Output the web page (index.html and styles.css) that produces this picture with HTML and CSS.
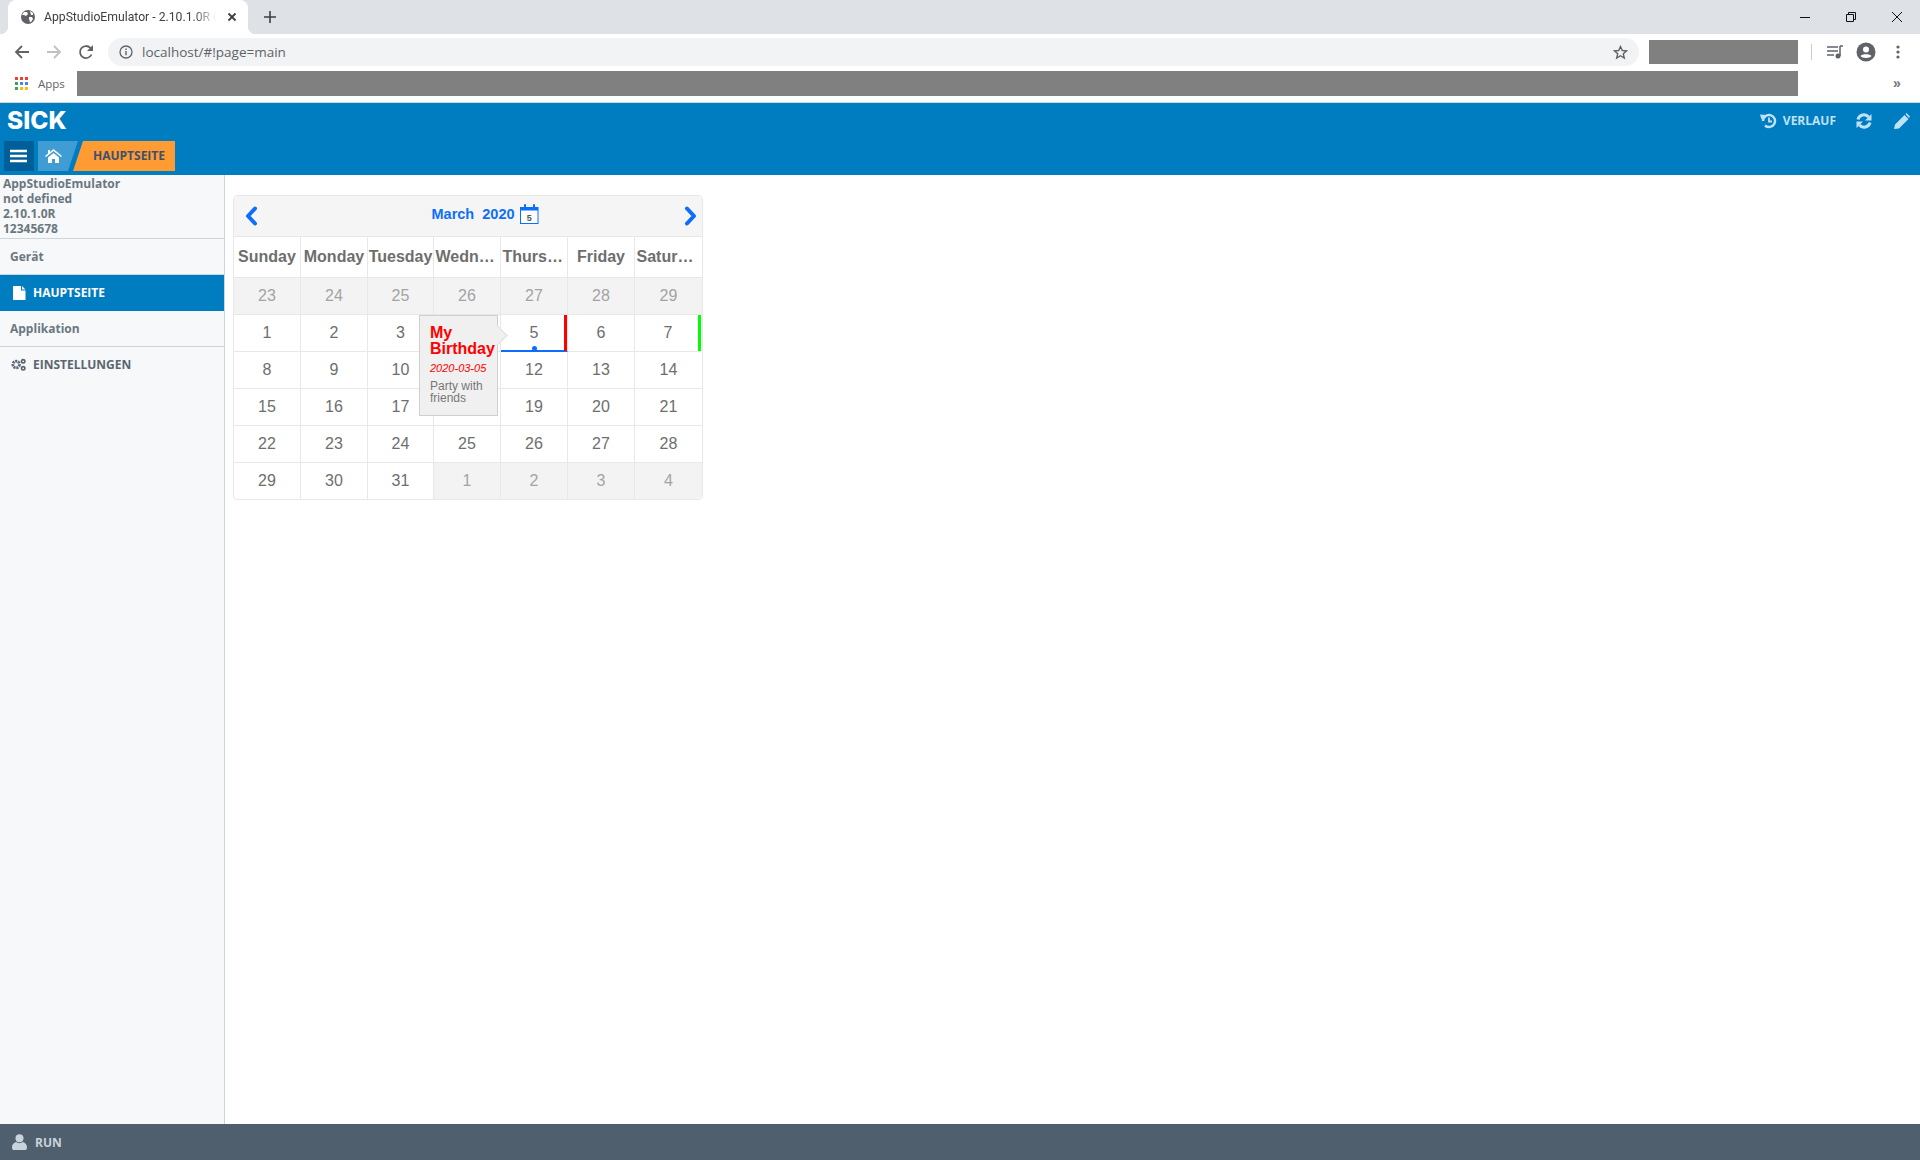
FILE: index.html
```html
<!DOCTYPE html>
<html lang="en">
<head>
    <meta charset="UTF-8">
    <title>AppStudioEmulator</title>
    <link rel="stylesheet" href="styles.css">
</head>
<body>
    <div class="tabstrip">
        <div class="tab">
            <svg class="tab-globe" width="14" height="14" viewBox="0 0 14 14"><circle cx="7" cy="7" r="7" fill="#5f6368"/><path d="M3 2l3 0 1 2-2 2-2-1-2 0zM8 7l3 0 1 2-2 3-1 0-1-3zM9 1l3 2 0 2-2 0z" fill="#fff"/></svg>
            <span class="tab-title">AppStudioEmulator - 2.10.1.0R (n</span>
            <svg class="tab-close" width="10" height="10" viewBox="0 0 10 10"><path d="M1.5 1.5l7 7M8.5 1.5l-7 7" stroke="#3c4043" stroke-width="1.8"/></svg>
        </div>
        <svg class="tab-new" width="12" height="12" viewBox="0 0 12 12"><path d="M6 0v12M0 6h12" stroke="#3c4043" stroke-width="1.6"/></svg>
        <div class="window-btns">
            <svg width="12" height="12" viewBox="0 0 12 12"><path d="M1 6.5h10" stroke="#111" stroke-width="1"/></svg>
            <svg width="12" height="12" viewBox="0 0 12 12"><path d="M1.5 3.5h7v7h-7zM3.5 3.5v-2h7v7h-2" fill="none" stroke="#111"/></svg>
            <svg width="12" height="12" viewBox="0 0 12 12"><path d="M1 1l10 10M11 1l-10 10" stroke="#111"/></svg>
        </div>
    </div>

    <div class="toolbar">
        <svg class="nav-icon" width="16" height="16" viewBox="0 0 16 16"><path d="M15 8H2M8 2L2 8l6 6" fill="none" stroke="#5f6368" stroke-width="1.8"/></svg>
        <svg class="nav-icon" width="16" height="16" viewBox="0 0 16 16"><path d="M1 8h13M8 2l6 6-6 6" fill="none" stroke="#bdc1c6" stroke-width="1.8"/></svg>
        <svg class="nav-icon" width="16" height="16" viewBox="0 0 16 16"><path d="M13.5 10.5A6 6 0 1 1 12.3 3.8L14 5.5" fill="none" stroke="#5f6368" stroke-width="1.8"/><path d="M15 1v6H9z" fill="#5f6368"/></svg>
        <div class="address">
            <svg width="14" height="14" viewBox="0 0 14 14"><circle cx="7" cy="7" r="6" fill="none" stroke="#5f6368" stroke-width="1.3"/><path d="M7 6v4.2M7 3.6v1.4" stroke="#5f6368" stroke-width="1.4"/></svg>
            <span class="address-text">localhost/#!page=main</span>
            <svg class="address-star" width="15" height="15" viewBox="0 0 15 15"><path d="M7.5 1.5l1.8 4 4.3.4-3.3 2.9 1 4.2-3.8-2.3-3.8 2.3 1-4.2L1.4 5.900l4.300-.4z" fill="none" stroke="#5f6368" stroke-width="1.4"/></svg>
        </div>
        <div class="redacted redacted-small"></div>
        <div class="toolbar-sep"></div>
        <svg class="queue-icon" width="16" height="14" viewBox="0 0 16 14"><path d="M0 2h11M0 6h11M0 10h7" stroke="#5f6368" stroke-width="1.3"/><path d="M13 1h3M13 1v10" stroke="#5f6368" stroke-width="1.5"/><circle cx="11" cy="11" r="2.500" fill="#5f6368"/></svg>
        <svg class="account-icon" width="20" height="20" viewBox="0 0 20 20"><circle cx="10" cy="10" r="9.500" fill="#5f6368"/><circle cx="10" cy="7.500" r="3" fill="#fff"/><path d="M4.500 14c1.500-2.500 9.500-2.500 11 0-1.500 2.600-9.500 2.600-11 0z" fill="#fff"/></svg>
        <svg class="dots-icon" width="4" height="14" viewBox="0 0 4 14"><circle cx="2" cy="2" r="1.600" fill="#5f6368"/><circle cx="2" cy="7" r="1.600" fill="#5f6368"/><circle cx="2" cy="12" r="1.600" fill="#5f6368"/></svg>
    </div>

    <div class="bookmarks">
        <div class="apps-grid">
            <i class="c-r"></i><i class="c-r"></i><i class="c-r"></i>
            <i class="c-g"></i><i class="c-b"></i><i class="c-b"></i>
            <i class="c-g"></i><i class="c-y"></i><i class="c-y"></i>
        </div>
        <span class="apps-label">Apps</span>
        <div class="redacted redacted-wide"></div>
        <span class="more">&raquo;</span>
    </div>

    <header class="app-header">
        <div class="header-top">
            <span class="logo">SICK</span>
            <div class="header-actions">
                <svg width="17" height="16" viewBox="0 0 17 16"><path d="M3 8a6 6 0 1 1 2 4.500" fill="none" stroke="#bfe2f4" stroke-width="2.400"/><path d="M0 1.500l6 .5-4.500 4.500z" fill="#bfe2f4"/><path d="M9 4.500v4h3" fill="none" stroke="#bfe2f4" stroke-width="1.800"/></svg>
                <span class="history-label">VERLAUF</span>
                <svg class="refresh" width="16" height="16" viewBox="0 0 16 16"><path d="M2 6.500A6 6 0 0 1 12.500 4M14 9.500A6 6 0 0 1 3.500 12" fill="none" stroke="#bfe2f4" stroke-width="3"/><path d="M15.500 1v6.500H9zM.5 15V8.500H7z" fill="#bfe2f4"/></svg>
                <svg class="pencil" width="16" height="16" viewBox="0 0 16 16"><path d="M0 16l1-4.500L10.500 2l4 4L5 15.500zM11.500 1l1-1 3.500 3.500-1 1.500z" fill="#bfe2f4"/></svg>
            </div>
        </div>
        <nav class="crumbs">
            <button class="crumb-menu">
                <svg width="18" height="14" viewBox="0 0 18 14"><path d="M0 2h17M0 7h17M0 12h17" stroke="#fff" stroke-width="2.500"/></svg>
            </button>
            <div class="crumb-home">
                <svg width="17" height="14" viewBox="0 0 17 14"><path d="M8.500 0L17 7l-1 1-7.500-6L1 8 0 7l3-2.500V1h2v1.900zM3 8.500l5.500-4.500 5.500 4.500V14h-4v-4H7v4H3z" fill="#fff"/></svg>
            </div>
            <div class="crumb-page">HAUPTSEITE</div>
        </nav>
    </header>

    <div class="app-main">
        <aside class="sidebar">
            <div class="device-info">
                <div>AppStudioEmulator</div>
                <div>not defined</div>
                <div>2.10.1.0R</div>
                <div>12345678</div>
            </div>
            <div class="side-group">Gerät</div>
            <div class="side-item active">
                <svg width="13" height="14" viewBox="0 0 13 14"><path d="M0 0h8v4.500h4.500V14H0zM9 0l3.500 3.500H9z" fill="#fff"/></svg>
                HAUPTSEITE
            </div>
            <div class="side-group">Applikation</div>
            <div class="side-item">
                <svg class="gears" width="15" height="13" viewBox="0 0 16 13"><circle cx="5.500" cy="6.500" r="3.500" fill="none" stroke="#5b6670" stroke-width="3" stroke-dasharray="2.200 .8"/><circle cx="13" cy="3" r="1.800" fill="none" stroke="#5b6670" stroke-width="1.800"/><circle cx="13" cy="10.500" r="1.800" fill="none" stroke="#5b6670" stroke-width="1.800"/></svg>
                EINSTELLUNGEN
            </div>
        </aside>

        <main class="content">
            <div class="calendar">
                <div class="cal-head">
                    <svg width="13" height="20" viewBox="0 0 13 20"><path d="M10 2.500L3 10l7 7.500" fill="none" stroke="#0d6efd" stroke-width="4" stroke-linecap="round" stroke-linejoin="round"/></svg>
                    <div class="cal-title">
                        <span>March&nbsp; 2020</span>
                        <svg width="19" height="20" viewBox="0 0 19 20"><rect x=".5" y="3.500" width="17.500" height="16" fill="#fff" stroke="#0d6efd"/><rect x="1" y="4" width="17" height="2.500" fill="#0d6efd"/><path d="M5 1v4M14 1v4" stroke="#0d6efd" stroke-width="2" stroke-linecap="round"/><text x="9.300" y="16.500" class="cal-icon-num">5</text></svg>
                    </div>
                    <svg width="13" height="20" viewBox="0 0 13 20"><path d="M3 2.500l7 7.500-7 7.500" fill="none" stroke="#0d6efd" stroke-width="4" stroke-linecap="round" stroke-linejoin="round"/></svg>
                </div>
                <div class="cal-grid">
                    <div class="dow">Sunday</div><div class="dow">Monday</div><div class="dow">Tuesday</div><div class="dow short">Wedn…</div><div class="dow short">Thurs…</div><div class="dow">Friday</div><div class="dow short">Satur…</div>

                    <div class="day off">23</div><div class="day off">24</div><div class="day off">25</div><div class="day off">26</div><div class="day off">27</div><div class="day off">28</div><div class="day off">29</div>

                    <div class="day">1</div><div class="day">2</div><div class="day">3</div><div class="day"></div><div class="day today">5</div><div class="day">6</div><div class="day marked">7</div>

                    <div class="day">8</div><div class="day">9</div><div class="day">10</div><div class="day"></div><div class="day">12</div><div class="day">13</div><div class="day">14</div>

                    <div class="day">15</div><div class="day">16</div><div class="day">17</div><div class="day"></div><div class="day">19</div><div class="day">20</div><div class="day">21</div>

                    <div class="day">22</div><div class="day">23</div><div class="day">24</div><div class="day">25</div><div class="day">26</div><div class="day">27</div><div class="day">28</div>

                    <div class="day">29</div><div class="day">30</div><div class="day">31</div><div class="day off">1</div><div class="day off">2</div><div class="day off">3</div><div class="day off">4</div>
                </div>
                <div class="popover">
                    <div class="pop-title">My Birthday</div>
                    <div class="pop-date">2020-03-05</div>
                    <div class="pop-text">Party with friends</div>
                </div>
            </div>
        </main>
    </div>

    <footer class="app-footer">
        <svg width="15" height="16" viewBox="0 0 15 16"><circle cx="7.500" cy="4.200" r="4" fill="#c9d3dc"/><path d="M0 13.500C0 9.500 3 8.500 4 8c2 1.500 5 1.500 7 0 1 .5 4 1.500 4 5.500 0 2-1 2.500-2 2.500H2c-1 0-2-.5-2-2.500z" fill="#c9d3dc"/></svg>
        <span>RUN</span>
    </footer>
</body>
</html>
```

FILE: styles.css
```css
* {
    box-sizing: border-box;
}
html, body {
    height: 100%;
}
body {
    margin: 0;
    display: flex;
    flex-direction: column;
    height: 1160px;
    overflow: hidden;
    background: white;
    font-family: 'Open Sans', sans-serif;
}
svg {
    flex: none;
}

/* browser window */
.tabstrip {
    height: 34px;
    display: flex;
    align-items: center;
    background: #dee1e6;
}
.tab {
    position: relative;
    height: 34px;
    width: 240px;
    margin-left: 8px;
    padding: 0 11px 0 13px;
    display: flex;
    align-items: center;
    background: white;
    border-radius: 8px 8px 0 0;
}
.tab::before, .tab::after {
    content: "";
    position: absolute;
    bottom: 0;
    width: 8px;
    height: 8px;
}
.tab::before {
    left: -8px;
    background: radial-gradient(circle at 0 0, transparent 8px, white 8.5px);
}
.tab::after {
    right: -8px;
    background: radial-gradient(circle at 100% 0, transparent 8px, white 8.5px);
}
.tab-title {
    flex: 1;
    min-width: 0;
    margin-left: 9px;
    font: 12.200px Roboto, sans-serif;
    color: #3c4043;
    white-space: nowrap;
    -webkit-mask-image: linear-gradient(to right, black 150px, transparent 172px);
}
.tab-close {
    margin-left: 6px;
}
.tab-new {
    margin-left: 16px;
}
.window-btns {
    margin-left: auto;
    margin-right: 17px;
    display: flex;
    gap: 34px;
}
.toolbar {
    height: 34px;
    display: flex;
    align-items: center;
    background: white;
    padding: 2px 0 0 14px;
}
.nav-icon {
    margin-right: 16px;
}
.address {
    width: 1531px;
    height: 28px;
    margin-left: -2px;
    padding: 0 11px;
    display: flex;
    align-items: center;
    background: #f1f3f4;
    border-radius: 14px;
}
.address-text {
    margin-left: 9px;
    font: 13.500px 'Open Sans', sans-serif;
    color: #5f6368;
}
.address-star {
    margin-left: auto;
}
.redacted {
    background: #808080;
}
.redacted-small {
    width: 149px;
    height: 24px;
    margin-left: 10px;
}
.toolbar-sep {
    width: 1px;
    height: 16px;
    margin-left: 13px;
    background: #c8cacc;
}
.queue-icon {
    margin-left: 15px;
}
.account-icon {
    margin-left: 13px;
}
.dots-icon {
    margin-left: 20px;
}
.bookmarks {
    height: 35px;
    display: flex;
    align-items: flex-start;
    padding: 3px 0 0 15px;
    background: white;
    border-bottom: 1px solid #d5d7da;
}
.apps-grid {
    width: 13px;
    height: 13px;
    margin-top: 6px;
    display: grid;
    grid-template-columns: repeat(3, 3px);
    grid-template-rows: repeat(3, 3px);
    gap: 2px;
}
.c-r { background: #ea4335; }
.c-g { background: #34a853; }
.c-b { background: #4285f4; }
.c-y { background: #fbbc05; }
.apps-label {
    margin: 5px 0 0 10px;
    width: 39px;
    font: 11.500px 'Open Sans', sans-serif;
    color: #5f6368;
}
.redacted-wide {
    width: 1721px;
    height: 25px;
}
.more {
    margin: 4px 0 0 95px;
    font: bold 14px 'Liberation Sans', sans-serif;
    color: #70757a;
}

/* app header */
.app-header {
    height: 72px;
    background: #007cc1;
    display: flex;
    flex-direction: column;
}
.header-top {
    height: 38px;
    display: flex;
    align-items: center;
    padding: 0 10px 3px 7px;
}
.logo {
    font: 800 24.500px/1 Inter, sans-serif;
    letter-spacing: 0;
    color: white;
}
.header-actions {
    margin-left: auto;
    display: flex;
    align-items: center;
}
.history-label {
    margin-left: 6px;
    font: 700 12px 'Open Sans', sans-serif;
    color: #bfe2f4;
}
.refresh {
    margin-left: 20px;
}
.pencil {
    margin-left: 22px;
}
.crumbs {
    display: flex;
    height: 30px;
    padding-left: 4px;
}
.crumb-menu {
    width: 30px;
    height: 30px;
    padding: 0;
    border: none;
    display: flex;
    align-items: center;
    justify-content: center;
    background: #005f99;
}
.crumb-home {
    width: 40px;
    margin-left: 4px;
    padding-left: 7px;
    display: flex;
    align-items: center;
    background: #3f9dd3;
    clip-path: polygon(0 0, 100% 0, calc(100% - 10px) 100%, 0 100%);
}
.crumb-page {
    width: 102px;
    margin-left: -5px;
    padding-left: 20px;
    background: #ff9b33;
    font: 700 12px/30px 'Open Sans', sans-serif;
    color: #3d5070;
    clip-path: polygon(10px 0, 100% 0, 100% 100%, 0 100%);
}

/* sidebar */
.app-main {
    flex: 1;
    display: flex;
    min-height: 0;
}
.sidebar {
    width: 225px;
    background: #f6f8fa;
    border-right: 1px solid #cdd5dc;
    color: #6b7780;
    font-weight: 700;
}
.device-info {
    height: 64px;
    padding: 1px 0 0 3px;
    font-size: 12px;
    line-height: 15px;
    border-bottom: 1px solid #cdd5dc;
}
.side-group {
    height: 36px;
    padding-left: 10px;
    font-size: 12px;
    line-height: 35px;
    border-bottom: 1px solid #cdd5dc;
}
.side-item {
    height: 36px;
    padding: 0 0 1px 13px;
    display: flex;
    align-items: center;
    gap: 7px;
    font-size: 12px;
    color: #5b6670;
}
.side-item.active {
    background: #007cc1;
    color: white;
}
.gears {
    margin-left: -2px;
}

/* calendar */
.content {
    flex: 1;
    padding: 20px 0 0 8px;
}
.calendar {
    position: relative;
    width: 470px;
    border: 1px solid #e8e8e8;
    border-radius: 4px;
    font-family: 'Liberation Sans', sans-serif;
}
.cal-head {
    height: 41px;
    padding: 0 5px 0 11px;
    display: flex;
    align-items: center;
    justify-content: space-between;
    background: #f5f5f5;
    border-bottom: 1px solid #e8e8e8;
}
.cal-title {
    display: flex;
    align-items: center;
    gap: 5px;
    margin: -5px 0 0 28px;
    font-weight: 700;
    font-size: 14.500px;
    color: #0d6efd;
}
.cal-icon-num {
    font: 700 9px 'Liberation Sans', sans-serif;
    fill: #555;
    text-anchor: middle;
}
.cal-grid {
    display: grid;
    grid-template-columns: 67px 67px 66px 67px 67px 67px 67px;
    grid-template-rows: 41px repeat(5, 37px) 36px;
}
.dow, .day {
    display: flex;
    align-items: center;
    justify-content: center;
    border-right: 1px solid #e8e8e8;
    border-bottom: 1px solid #e8e8e8;
    color: #6e6e6e;
}
.dow:nth-child(7n), .day:nth-child(7n) {
    border-right: none;
}
.day:nth-last-child(-n+7) {
    border-bottom: none;
}
.dow {
    padding: 0 1px;
    font-weight: 700;
    font-size: 16px;
    white-space: nowrap;
}
.dow.short {
    justify-content: flex-start;
    padding-left: 1.500px;
}
.day {
    font-size: 16px;
}
.day.off {
    background: #f3f3f3;
    color: #a3a3a3;
}
.day.today {
    position: relative;
    border-bottom-color: #0d6efd;
    box-shadow: inset -3px 0 0 #f00, inset 0 -1px 0 #0d6efd;
}
.day.today::after {
    content: "";
    position: absolute;
    left: 31px;
    bottom: 0;
    width: 5px;
    height: 5px;
    border-radius: 50%;
    background: #0d6efd;
}
.day.marked {
    box-shadow: inset -3px 0 0 #0f0;
    margin-right: 1px;
}
.popover {
    position: absolute;
    left: 185px;
    top: 119px;
    width: 79px;
    height: 101px;
    padding: 9px 1px 0 10px;
    background: #f0f0f0;
    border: 1px solid #cfcfcf;
}
.popover::before {
    content: "";
    position: absolute;
    right: -8px;
    top: 12px;
    width: 14px;
    height: 14px;
    background: #f0f0f0;
    border-top: 1px solid #dcdcdc;
    border-right: 1px solid #dcdcdc;
    transform: rotate(45deg) scale(.95);
}
.pop-title {
    position: relative;
    font-weight: 700;
    font-size: 16px;
    line-height: 16px;
    color: #f00;
}
.pop-date {
    margin-top: 5px;
    font-style: italic;
    font-size: 11px;
    color: #f00;
}
.pop-text {
    margin-top: 6px;
    font-size: 12px;
    line-height: 12px;
    color: #777;
}

.app-footer {
    height: 36px;
    padding-left: 12px;
    display: flex;
    align-items: center;
    gap: 8px;
    background: #505f6d;
    color: #c9d3dc;
    font-weight: 700;
    font-size: 12px;
}
```
